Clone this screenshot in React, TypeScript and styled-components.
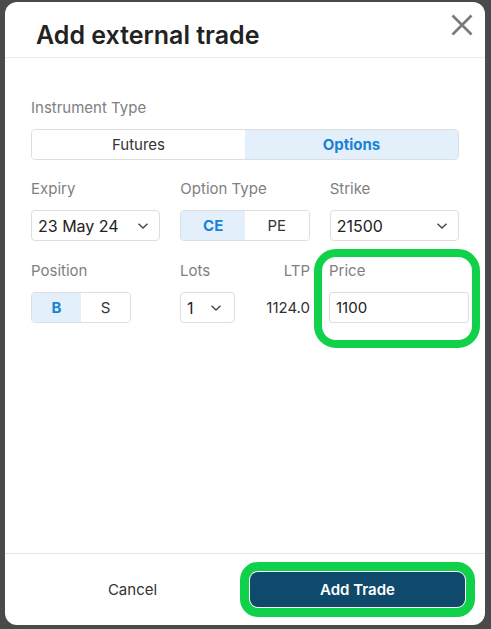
import React from "react";
import styled, { createGlobalStyle } from "styled-components";

const Global = createGlobalStyle`
  html, body { margin: 0; padding: 0; }
  body {
    width: 491px;
    height: 629px;
    overflow: hidden;
    background: #4a4a4a;
    font-family: Inter, "Noto Sans", sans-serif;
  }
`;

const Backdrop = styled.div`
  width: 491px;
  height: 629px;
  padding: 2px 6px 4px 5px;
  box-sizing: border-box;
`;

const Modal = styled.div`
  width: 480px;
  height: 623px;
  background: #fff;
  border-radius: 12px;
  display: flex;
  flex-direction: column;
`;

const Header = styled.div`
  height: 55px;
  border-bottom: 1px solid #ececec;
  display: flex;
  align-items: center;
  justify-content: space-between;
  padding: 0 10px 0 31px;
`;

const Title = styled.h2`
  margin: 0;
  font-size: 25px;
  font-weight: 600;
  color: #222;
  padding-top: 10px;
`;

const Close = styled.button`
  border: 0;
  background: none;
  padding: 0;
  width: 26px;
  height: 26px;
  align-self: flex-start;
  margin-top: 10px;
  display: flex;
  align-items: center;
  justify-content: center;
`;

const Body = styled.div`
  flex: 1;
  padding: 40px 26px 0 26px;
  display: flex;
  flex-direction: column;
`;

const Label = styled.div<{ $align?: string }>`
  font-size: 15px;
  line-height: 20px;
  color: #808080;
  margin-bottom: 11px;
  text-align: ${(p) => p.$align || "left"};
`;

const Segment = styled.div<{ $w?: number }>`
  display: grid;
  grid-template-columns: 1fr 1fr;
  width: ${(p) => (p.$w ? `${p.$w}px` : "100%")};
  height: 31px;
  border: 1px solid #dedede;
  border-radius: 4px;
  overflow: hidden;
  box-sizing: border-box;
`;

const SegBtn = styled.div<{ $on?: boolean }>`
  display: flex;
  align-items: center;
  justify-content: center;
  font-size: 15px;
  background: ${(p) => (p.$on ? "#e3f0fb" : "#fff")};
  color: ${(p) => (p.$on ? "#1882d5" : "#333")};
  font-weight: ${(p) => (p.$on ? 700 : 400)};
`;

const Row = styled.div`
  display: grid;
  grid-template-columns: 1fr 1fr 1fr;
  column-gap: 20px;
  margin-top: 19px;
`;

const Row3 = styled.div`
  display: grid;
  grid-template-columns: 130px 55px 56px 140px;
  column-gap: 19px;
  margin-top: 20px;
  align-items: start;
`;

const Field = styled.div`
  display: flex;
  flex-direction: column;
`;

const Select = styled.div<{ $w?: number; $pr?: number }>`
  width: ${(p) => (p.$w ? `${p.$w}px` : "100%")};
  height: 31px;
  box-sizing: border-box;
  border: 1px solid #dedede;
  border-radius: 4px;
  display: flex;
  align-items: center;
  justify-content: space-between;
  padding: 0 ${(p) => p.$pr ?? 10}px 0 6px;
  font-size: 16px;
  color: #222;
`;

const LtpValue = styled.div`
  height: 31px;
  display: flex;
  align-items: center;
  justify-content: flex-end;
  font-size: 15px;
  color: #333;
`;

const PriceField = styled(Field)`
  position: relative;
`;

const Highlight = styled.div<{ $r: number; $w: number }>`
  position: absolute;
  box-sizing: border-box;
  border: ${(p) => p.$w}px solid #11d14b;
  border-radius: ${(p) => p.$r}px;
  pointer-events: none;
`;

const Input = styled.div`
  width: 140px;
  height: 31px;
  box-sizing: border-box;
  border: 1px solid #dedede;
  border-radius: 3px;
  display: flex;
  align-items: center;
  padding: 0 6px;
  font-size: 15px;
  color: #222;
`;

const Footer = styled.div`
  height: 71px;
  border-top: 1px solid #e6e6e6;
  display: grid;
  grid-template-columns: 1fr 1fr;
  column-gap: 10px;
  padding: 0 20px;
  align-items: center;
`;

const CancelBtn = styled.button`
  border: 0;
  background: none;
  height: 35px;
  font-family: inherit;
  font-size: 15px;
  color: #333;
`;

const PrimaryWrap = styled.div`
  position: relative;
  height: 35px;
`;

const PrimaryBtn = styled.button`
  width: 100%;
  height: 35px;
  border: 0;
  border-radius: 8px;
  background: #0f4a6d;
  color: #fff;
  font-family: inherit;
  font-size: 15px;
  font-weight: 600;
`;

const Chevron = () => (
  <svg width="12" height="8" viewBox="0 0 12 8">
    <path d="M1.5 1.8 L6 6 L10.5 1.8" fill="none" stroke="#444" strokeWidth="1.4" />
  </svg>
);

export default function App() {
  return (
    <>
      <Global />
      <Backdrop>
        <Modal>
          <Header>
            <Title>Add external trade</Title>
            <Close aria-label="close">
              <svg width="24" height="24" viewBox="0 0 24 24">
                <path d="M2.5 2.5 L21.5 21.5 M21.5 2.5 L2.5 21.5" stroke="#7a7a7a" strokeWidth="2.6" />
              </svg>
            </Close>
          </Header>
          <Body>
            <Label>Instrument Type</Label>
            <Segment>
              <SegBtn>Futures</SegBtn>
              <SegBtn $on>Options</SegBtn>
            </Segment>
            <Row>
              <Field>
                <Label>Expiry</Label>
                <Select>
                  23 May 24 <Chevron />
                </Select>
              </Field>
              <Field>
                <Label>Option Type</Label>
                <Segment>
                  <SegBtn $on>CE</SegBtn>
                  <SegBtn>PE</SegBtn>
                </Segment>
              </Field>
              <Field>
                <Label>Strike</Label>
                <Select>
                  21500 <Chevron />
                </Select>
              </Field>
            </Row>
            <Row3>
              <Field>
                <Label>Position</Label>
                <Segment $w={100}>
                  <SegBtn $on>B</SegBtn>
                  <SegBtn>S</SegBtn>
                </Segment>
              </Field>
              <Field>
                <Label>Lots</Label>
                <Select $w={55} $pr={12}>
                  1 <Chevron />
                </Select>
              </Field>
              <Field>
                <Label $align="right">LTP</Label>
                <LtpValue>1124.0</LtpValue>
              </Field>
              <PriceField>
                <Highlight $r={22} $w={8} style={{ left: -15, top: -12, width: 166, height: 99 }} />
                <Label>Price</Label>
                <Input>1100</Input>
              </PriceField>
            </Row3>
          </Body>
          <Footer>
            <CancelBtn>Cancel</CancelBtn>
            <PrimaryWrap>
              <Highlight $r={18} $w={9} style={{ left: -10, top: -10, width: 235, height: 55 }} />
              <PrimaryBtn>Add Trade</PrimaryBtn>
            </PrimaryWrap>
          </Footer>
        </Modal>
      </Backdrop>
    </>
  );
}
